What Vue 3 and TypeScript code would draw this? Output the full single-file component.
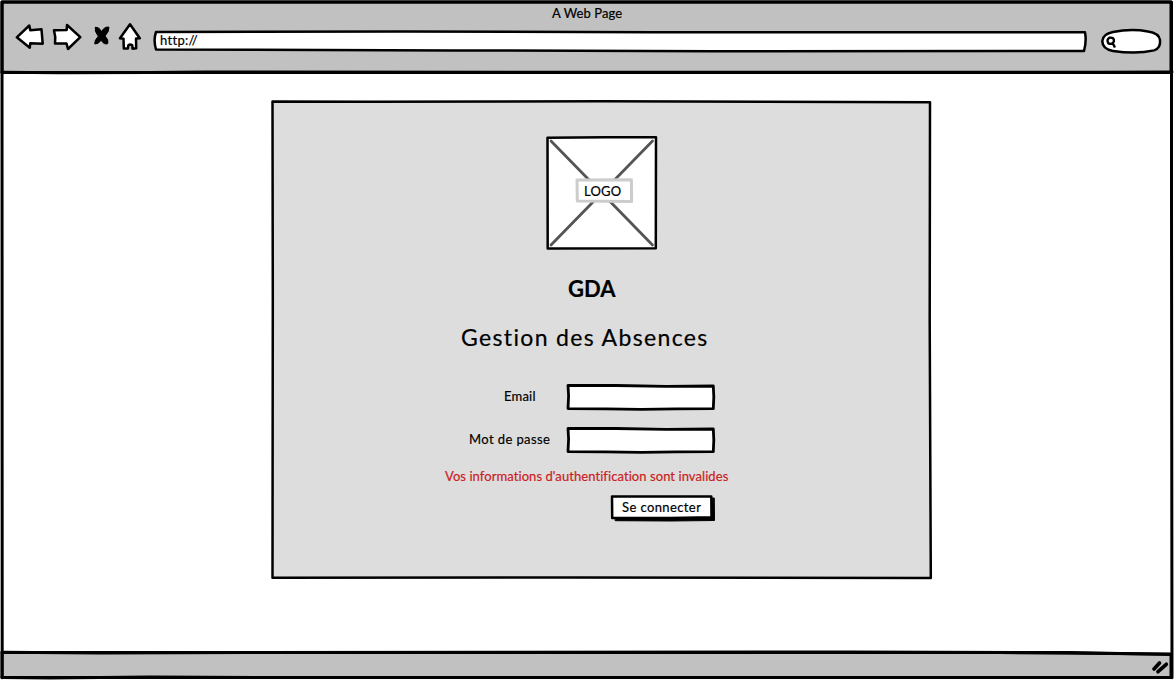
<script setup lang="ts">
import { ref } from 'vue'

interface Field {
  id: string
  label: string
  type: string
}

const fields: Field[] = [
  { id: 'email', label: 'Email', type: 'text' },
  { id: 'password', label: 'Mot de passe', type: 'password' },
]
const values = ref<Record<string, string>>({ email: '', password: '' })
</script>

<template>
  <div class="window">
    <header class="chrome">
      <svg class="sketch" viewBox="0 0 1174 76">
        <path class="bar" d="M2 2 H1171 V72.5 H2Z" />
        <path class="line" d="M2 72.2 L60 72.8 L150 72.5 L205 72 L700 72.3 L1100 72.2 L1172 72" />
      </svg>
      <div class="title"><span>A Web Page</span></div>
      <nav class="tools">
        <svg class="icons" viewBox="0 0 140 36">
          <path class="shape" d="M16.8 17.3 L29.3 5.5 L30.3 10.3 L41.5 9.3 L42.7 23.7 L30.3 23.2 L29.8 27.7Z" />
          <path class="shape" d="M54 10.3 L66.7 10 L67 5 L80.3 17.2 L68 29 L66.5 23.5 L55 23.5 Q56 17 54 10.3Z" />
          <path class="cross" d="M95.3 7.5 Q98.5 6.5 101.5 11.5 Q105 6 109 7.2 Q109.5 11 105 16 Q109 20 107.8 23.5 Q104.5 25.3 101 20.3 Q98 24.5 94.8 24 Q94 21 98.3 16.2 Q94 11 95.3 7.5Z" />
          <path class="shape" d="M130 4.3 L139.8 18.2 L136 18.6 L136.2 28.3 L132.5 28.7 L132.3 25.2 Q130 23.7 128.3 25.4 L128 28.5 L123.8 28.5 L123.5 18.7 L120 18.3Z" />
        </svg>
        <div class="address">
          <svg class="sketch" viewBox="0 0 936 26">
            <path class="field" d="M3 4 L250 3.4 L500 4.3 L932 4.2 Q933.7 13 931 23 L560 23.2 L300 22.4 L3 21.4 Q.2 12 3 4Z" />
          </svg>
          <span>http://</span>
        </div>
        <div class="search">
          <svg class="sketch" viewBox="0 0 62 28">
            <path class="field" d="M12 4 Q30 .2 47 3.4 Q58 5 59 12 Q60 20 53 22.4 Q35 26.5 12 22.9 Q1.3 21 1.3 13 Q1.8 6 12 4Z" />
            <path class="lens" d="M8.4 9.7 Q13.4 9.1 12.9 13.3 Q11.5 17 7.4 15.3 Q5.2 11.6 8.4 9.7Z M11.8 15.3 L13.5 18.6" />
          </svg>
        </div>
      </nav>
    </header>

    <main class="page">
      <section class="card">
        <svg class="sketch" viewBox="0 0 661 480">
          <path class="panel" d="M1.5 1.5 L100 1.8 L330 1.3 L659 2.2 L658.7 220 L659.8 478 L300 477.5 L1.5 477.8 L1.8 200Z" />
        </svg>
        <div class="logo">
          <svg class="sketch" viewBox="0 0 112 114">
            <path class="field" d="M1.5 1.7 L60 1.2 L110 1.3 L109.8 112.3 L1.7 112.6Z" />
            <path class="diagonal" d="M5 5 L106.5 109 M106.5 5 L5 109" />
            <path class="tag" d="M31 44 L85.4 43.8 L85.6 65.6 L31.3 65Z" />
          </svg>
          <span>LOGO</span>
        </div>
        <h1><span>GDA</span></h1>
        <h2><span>Gestion des Absences</span></h2>
        <form @submit.prevent>
          <div v-for="f in fields" :key="f.id" class="row">
            <label :for="f.id" :class="f.id">{{ f.label }}</label>
            <div class="entry">
              <svg class="sketch" viewBox="0 0 150 28">
                <path class="input" d="M2 2.3 L50 2.5 L100 3.3 L147.3 3 L147.8 14 L147.3 25.6 L110 25.8 L75 26.4 L40 25.8 L2 25.6 L2.6 13Z" />
              </svg>
              <input :id="f.id" v-model="values[f.id]" :type="f.type" />
            </div>
          </div>
          <p class="error"><span>Vos informations d'authentification sont invalides</span></p>
          <button type="submit">
            <svg class="sketch" viewBox="0 0 105 28">
              <path class="shadow" d="M4.5 5 L103.3 3 L103.5 25.5 L60 26 L4.5 25.7Z" />
              <path class="field" d="M1 1.5 L100.3 1.6 L100.5 22.2 L60 23 L1.2 23Z" />
            </svg>
            <span>Se connecter</span>
          </button>
        </form>
      </section>
    </main>

    <footer class="status">
      <svg class="sketch" viewBox="0 0 1174 32">
        <path class="bar" d="M2 4.5 L1000 4.5 L1171 6 V29.5 H2Z" />
        <path class="line" d="M2 4.3 L100 5 L250 4.5 L850 4 L1070 4.5 L1171 6.5" />
        <path class="line" d="M2 29.6 L50 30 L150 29 L260 29.4 L900 29.5 L1171 29.6" />
        <path class="grip" d="M1154 21 L1159.5 15 M1158 23.7 L1166.3 16.3" />
      </svg>
    </footer>
    <svg class="sketch frame" viewBox="0 0 1174 680">
      <path class="line" d="M2 2 H1171.5 L1171.5 200 L1172 677.8 M2 2 L2.2 677.8" />
    </svg>
  </div>
</template>

<style>
body {
  margin: 0;
  overflow: hidden;
}
</style>

<style scoped>
.window {
  position: relative;
  display: flex;
  flex-direction: column;
  width: 1174px;
  height: 680px;
  background: #fff;
  color: #000;
  font: 13px/20px Lato, "Noto Sans", sans-serif;
  -webkit-text-stroke-width: 0.2px;
  white-space: nowrap;
}
.sketch {
  position: absolute;
  inset: 0;
  width: 100%;
  height: 100%;
  overflow: visible;
  pointer-events: none;
}
path {
  fill: none;
  stroke: #000;
  stroke-width: 3;
  stroke-linejoin: round;
  stroke-linecap: round;
}
path.bar { fill: #c1c1c1; }
path.shape { fill: #fff; stroke-width: 2.5; }
path.cross { fill: #000; stroke-width: 1; }
path.field { fill: #fff; stroke-width: 2.5; }
path.input { fill: #fff; stroke-width: 2.8; }
path.lens { stroke-width: 2.4; }
path.panel { fill: #ddd; stroke-width: 2.5; }
path.diagonal { stroke: #555; stroke-width: 2.8; }
path.tag { fill: #fff; stroke: #ccc; }
path.shadow { fill: #000; stroke-width: 1; }
path.grip { stroke-width: 3.7; }

.chrome {
  position: relative;
  height: 76px;
  flex: none;
}
.title {
  position: relative;
  height: 21px;
  padding: 3px 0 0 552px;
  letter-spacing: 0.1px;
}
.tools {
  position: relative;
  display: flex;
  align-items: flex-start;
  margin-top: -4px;
}
.icons {
  width: 140px;
  height: 36px;
  overflow: visible;
}
.address {
  position: relative;
  width: 936px;
  height: 26px;
  margin: 8px 0 0 13px;
}
.address span {
  position: relative;
  display: block;
  padding: 2px 0 0 7px;
  letter-spacing: 0.3px;
}
.search {
  position: relative;
  width: 62px;
  height: 28px;
  margin: 8px 0 0 12px;
}
.page {
  flex: 1;
  padding: 24px 0 0 271px;
}
.card {
  position: relative;
  width: 661px;
  height: 480px;
  display: flex;
  flex-direction: column;
}
.logo {
  position: relative;
  width: 112px;
  height: 114px;
  margin: 36px 0 0 275px;
}
.logo span {
  position: relative;
  display: block;
  margin: 45px 0 0 38px;
  letter-spacing: 0.2px;
}
h1, h2 {
  position: relative;
  margin: 0;
  line-height: 28px;
}
h1 {
  margin: 25px 0 0 297px;
  font-size: 22px;
  font-weight: 700;
}
h2 {
  margin: 20px 0 0 190px;
  font-size: 23px;
  font-weight: 400;
  letter-spacing: 1.35px;
}
form {
  position: relative;
  display: flex;
  flex-direction: column;
  gap: 15px;
  margin-top: 32px;
}
.row {
  display: grid;
  grid-template-columns: 295px 150px;
  height: 28px;
}
label { padding-top: 3px; }
label.email { padding-left: 233px; letter-spacing: 0.2px; }
label.password { padding-left: 198px; letter-spacing: 0.4px; }
.entry { position: relative; }
.entry input {
  position: relative;
  box-sizing: border-box;
  width: 100%;
  height: 100%;
  padding: 0 8px;
  border: 0;
  outline: 0;
  background: transparent;
  font: inherit;
}
.error {
  height: 20px;
  margin: -3px 0 0 174px;
  color: #cc1c22;
  letter-spacing: 0.07px;
}
button {
  position: relative;
  width: 105px;
  height: 28px;
  margin: -6px 0 0 340px;
  padding: 0 0 5px 11px;
  border: 0;
  background: transparent;
  color: inherit;
  font: inherit;
  letter-spacing: 0.4px;
  text-align: left;
}
button span { position: relative; }
.status {
  position: relative;
  height: 32px;
  flex: none;
}
</style>
